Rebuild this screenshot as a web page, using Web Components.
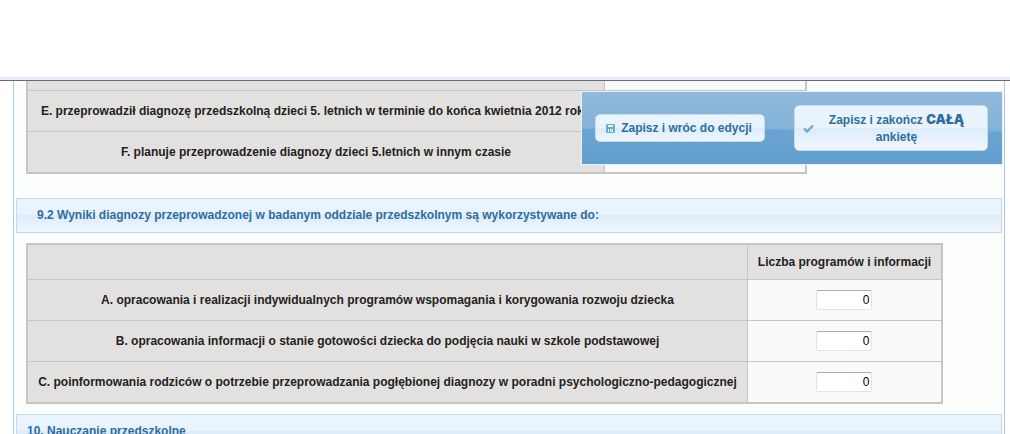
<!DOCTYPE html>
<html lang="pl">
<head>
<meta charset="utf-8">
<title>Ankieta</title>
<style>
  body { margin: 0; background: #fff; font: 12px/17px "Liberation Sans", Arial, sans-serif; color: #222; }
  strong { font: 900 13px/16px Inter, sans-serif; }
</style>
</head>
<body>
<survey-page>
  <action-bar slot="actions">
    <action-button icon="disk">Zapisz i wróc do edycji</action-button>
    <action-button icon="check" wide>Zapisz i zakończ <strong>CAŁĄ</strong> ankietę</action-button>
  </action-bar>
  <survey-table clipped></survey-table>
  <section-bar sub>9.2 Wyniki diagnozy przeprowadzonej w badanym oddziale przedszkolnym są wykorzystywane do:</section-bar>
  <survey-table></survey-table>
  <section-bar>10. Nauczanie przedszkolne</section-bar>
</survey-page>
<script>
class BaseElement extends HTMLElement {
  render(html) {
    const t = document.createElement('template');
    t.innerHTML = html;
    this.attachShadow({ mode: 'open' }).append(t.content.cloneNode(true));
  }
}

customElements.define('survey-page', class extends BaseElement {
  connectedCallback() {
    this.render(`
      <style>
        :host { display: flex; flex-direction: column; height: 100vh; overflow: hidden; }
        header { flex: none; height: 77px; border-bottom: 3px solid #e6ecf9; }
        .view { position: relative; flex: 1; min-height: 0; overflow: hidden; border-top: 1px solid #6c6a70; }
        main { display: flex; flex-direction: column; align-items: flex-start; margin: 0 5px 0 13px; padding: 0 2px;
               border: solid #a6c9e2; border-width: 0 1px; background: #fcfdfd; min-height: 100%; box-sizing: border-box; }
        slot[name=actions] { position: absolute; top: 10px; right: 7px; display: block; z-index: 1; }
      </style>
      <header></header>
      <div class="view">
        <main><slot></slot></main>
        <slot name="actions"></slot>
      </div>`);
  }
});

customElements.define('section-bar', class extends BaseElement {
  connectedCallback() {
    this.render(`
      <style>
        :host { display: block; align-self: stretch; box-sizing: border-box; height: 35px; padding: 0 10px;
                border: 1px solid #c5dbec; color: #2e6e9e;
                background: linear-gradient(#eaf4fd, #e8f3fd 50%, #dcecfb 50%, #f0f6fe); }
        :host([sub]) { padding-left: 20px; }
        h3 { margin: 0; font: bold 12px/32px "Liberation Sans", Arial, sans-serif; }
      </style>
      <h3><slot></slot></h3>`);
  }
});

customElements.define('survey-table', class extends BaseElement {
  connectedCallback() {
    const clipped = this.hasAttribute('clipped');
    const field = label => `<input type="text" value="0" aria-label="${label}">`;
    const row = label => `<tr><th scope="row">${label}</th><td>${clipped ? '' : field(label)}</td></tr>`;
    const head = clipped
      ? '<tr class="rest"><th></th><td></td></tr>'
      : '<tr class="head"><th></th><th scope="col">Liczba programów i informacji</th></tr>';
    const labels = clipped
      ? ['E. przeprowadził diagnozę przedszkolną dzieci 5. letnich w terminie do końca kwietnia 2012 roku',
         'F. planuje przeprowadzenie diagnozy dzieci 5.letnich w innym czasie']
      : ['A. opracowania i realizacji indywidualnych programów wspomagania i korygowania rozwoju dziecka',
         'B. opracowania informacji o stanie gotowości dziecka do podjęcia nauki w szkole podstawowej',
         'C. poinformowania rodziców o potrzebie przeprowadzania pogłębionej diagnozy w poradni psychologiczno-pedagogicznej'];
    this.render(`
      <style>
        :host { display: block; margin: 10px; }
        :host([clipped]) { margin: 0 10px 24px; }
        table { border: 2px solid #c5c5c5; border-collapse: separate; border-spacing: 0; table-layout: fixed; width: 917px; }
        col.value { width: 194px; }
        :host([clipped]) table { border-top: 0; width: 781px; }
        :host([clipped]) col.value { width: 201px; }
        th, td { box-sizing: border-box; height: 41px; padding: 0; border-top: 1px solid #c5c5c5; text-align: center;
                 vertical-align: middle; white-space: nowrap; font: bold 12px/17px "Liberation Sans", Arial, sans-serif; }
        th { background: #e2e1e0; }
        td { background: #fafafa; padding-right: 2px; }
        tr > :last-child { border-left: 1px solid #c5c5c5; }
        .head th { height: 34px; border-top: 0; }
        .rest th, .rest td { height: 9px; border-top: 0; }
        input { display: block; box-sizing: border-box; width: 56px; height: 20px; margin: 0 auto; padding: 0 1px;
                border: 1px solid #e2e3ea; border-top-color: #abadb3; border-radius: 2px; background: #fff; color: #000;
                font: 12px/18px "Liberation Sans", Arial, sans-serif; text-align: right; }
      </style>
      <table>
        <colgroup><col><col class="value"></colgroup>
        <tbody>${head}${labels.map(row).join('')}</tbody>
      </table>`);
  }
});

customElements.define('action-bar', class extends BaseElement {
  connectedCallback() {
    this.render(`
      <style>
        :host { position: relative; display: flex; align-items: center; justify-content: space-between;
                box-sizing: border-box; width: 422px; height: 74px; padding: 0 14px 0 13px; border: 1px solid #e8f0f8;
                background: linear-gradient(#72aad6, #629fce); }
        /* glossy upper half, its lower edge dips towards the right */
        :host::before { content: ""; position: absolute; inset: 0; z-index: -1;
                background: linear-gradient(#90b9dc, #83b2d8 55%);
                clip-path: polygon(0 0, 100% 0, 100% 55%, 80% 54%, 50% 52%, 25% 51%, 0 51%); }
        :host { z-index: 0; }
      </style>
      <slot></slot>`);
  }
});

customElements.define('action-button', class extends BaseElement {
  connectedCallback() {
    const icons = {
      disk: '<path fill="#6da8d5" fill-rule="evenodd" d="M1 0h7l1 1v7l-1 1H1L0 8V1zM2 1v2h5V1zM2 5v3h1V5zM4 5v3h3V5zM5 6h1v1H5z"/>',
      check: '<path fill="none" stroke="#6da8d5" stroke-width="2.4" d="M1 4.5L4 7.5L10 1.5"/>'
    };
    const icon = this.getAttribute('icon');
    this.render(`
      <style>
        :host { display: block; }
        button { display: flex; align-items: center; box-sizing: border-box; width: 170px; height: 28px; margin: 0;
                 padding: 0 10px; border: 1px solid #c5dbec; border-radius: 5px; color: #2e6e9e; text-align: center;
                 background: linear-gradient(#eaf4fd, #e8f3fd 50%, #dcecfb 50%, #f0f6fe);
                 font: bold 12px/17px "Liberation Sans", Arial, sans-serif; }
        :host([wide]) button { width: 194px; height: 46px; padding: 0 8px; }
        svg { flex: none; }
        span { flex: 1; white-space: nowrap; padding-left: 4px; }
        :host([wide]) span { white-space: normal; padding: 0 8px; }
      </style>
      <button type="button">
        <svg width="${icon === 'disk' ? 9 : 11}" height="9" aria-hidden="true">${icons[icon]}</svg>
        <span><slot></slot></span>
      </button>`);
  }
});
</script>
</body>
</html>
